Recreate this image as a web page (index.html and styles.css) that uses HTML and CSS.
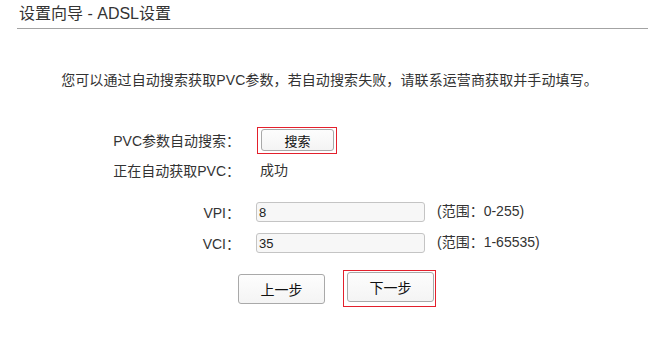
FILE: index.html
```
<!DOCTYPE html>
<html lang="zh-CN">
<head>
<meta charset="utf-8">
<title>设置向导 - ADSL设置</title>
<link rel="stylesheet" href="styles.css">
</head>
<body>
<div class="header">设置向导 - ADSL设置</div>
<p class="intro">您可以通过自动搜索获取PVC参数，若自动搜索失败，请联系运营商获取并手动填写。</p>
<div class="form">
  <div class="row row-search">
    <span class="label">PVC参数自动搜索<span class="colon">：</span></span>
    <span class="hl hl-search"><button class="btn btn-search" type="button">搜索</button></span>
  </div>
  <div class="row row-status">
    <span class="label">正在自动获取PVC<span class="colon">：</span></span>
    <span class="status">成功</span>
  </div>
  <div class="row row-vpi">
    <span class="label">VPI<span class="colon">：</span></span>
    <input class="field" type="text" value="8">
    <span class="range">(范围<span class="colon">：</span>0-255)</span>
  </div>
  <div class="row row-vci">
    <span class="label">VCI<span class="colon">：</span></span>
    <input class="field" type="text" value="35">
    <span class="range">(范围<span class="colon">：</span>1-65535)</span>
  </div>
</div>
<div class="nav">
  <button class="btn btn-nav" type="button">上一步</button>
  <span class="hl hl-nav"><button class="btn btn-nav" type="button">下一步</button></span>
</div>
</body>
</html>
```
FILE: styles.css
```
html, body {
  margin: 0;
  padding: 0;
  background: #ffffff;
}
body {
  font-family: "Liberation Sans", "Noto Sans CJK SC", sans-serif;
  color: #333333;
  font-size: 14px;
}
.header {
  margin: 0 11px 0 17px;
  padding: 5px 0 0 2px;
  height: 23px;
  font-size: 16px;
  line-height: 18px;
  border-bottom: 1px solid #a3a3a3;
}
.intro {
  margin: 41px 0 0 0;
  text-align: center;
  font-size: 14px;
  line-height: 20px;
  letter-spacing: 0.1px;
}
.colon {
  font-family: "Noto Sans CJK JP", sans-serif;
}
.form {
  margin: 37px 0 0 112px;
}
.row {
  display: flex;
  align-items: center;
}
.label {
  width: 128px;
  text-align: right;
  line-height: 20px;
  flex: none;
}
.row-search {
  height: 27px;
}
.row-search .hl {
  margin-left: 17px;
}
.row-status {
  margin-top: 6px;
  height: 20px;
}
.status {
  margin-left: 20px;
  line-height: 20px;
}
.row-vpi {
  margin-top: 22px;
  height: 20px;
}
.row-vci {
  margin-top: 11px;
  height: 20px;
}
.field {
  margin: 0 0 0 16px;
  width: 169px;
  height: 20px;
  box-sizing: border-box;
  border: 1px solid #c4c4c4;
  border-radius: 3px;
  background: #f7f7f7;
  padding: 0 2px;
  font-family: "Liberation Sans", sans-serif;
  font-size: 13px;
  color: #222222;
}
.range {
  margin-left: 12px;
  line-height: 20px;
  position: relative;
  top: -2px;
}
.hl {
  display: inline-flex;
  border: 1px solid #e3202c;
}
.hl-search {
  padding: 1px 2px 2px 3px;
}
.btn {
  box-sizing: border-box;
  border: 1px solid #a9a9a9;
  border-radius: 3px;
  background: linear-gradient(#fdfdfd, #f4f4f4);
  color: #111111;
  font-family: "Liberation Sans", "Noto Sans CJK SC", sans-serif;
  padding: 0;
  margin: 0;
}
.btn-search {
  width: 73px;
  height: 22px;
  font-size: 13px;
}
.nav {
  display: flex;
  align-items: center;
  margin: 17px 0 0 238px;
}
.btn-nav {
  width: 87px;
  height: 30px;
  font-size: 14px;
}
.hl-nav {
  margin-left: 18px;
  padding: 1px 1px 4px 3px;
}
```
